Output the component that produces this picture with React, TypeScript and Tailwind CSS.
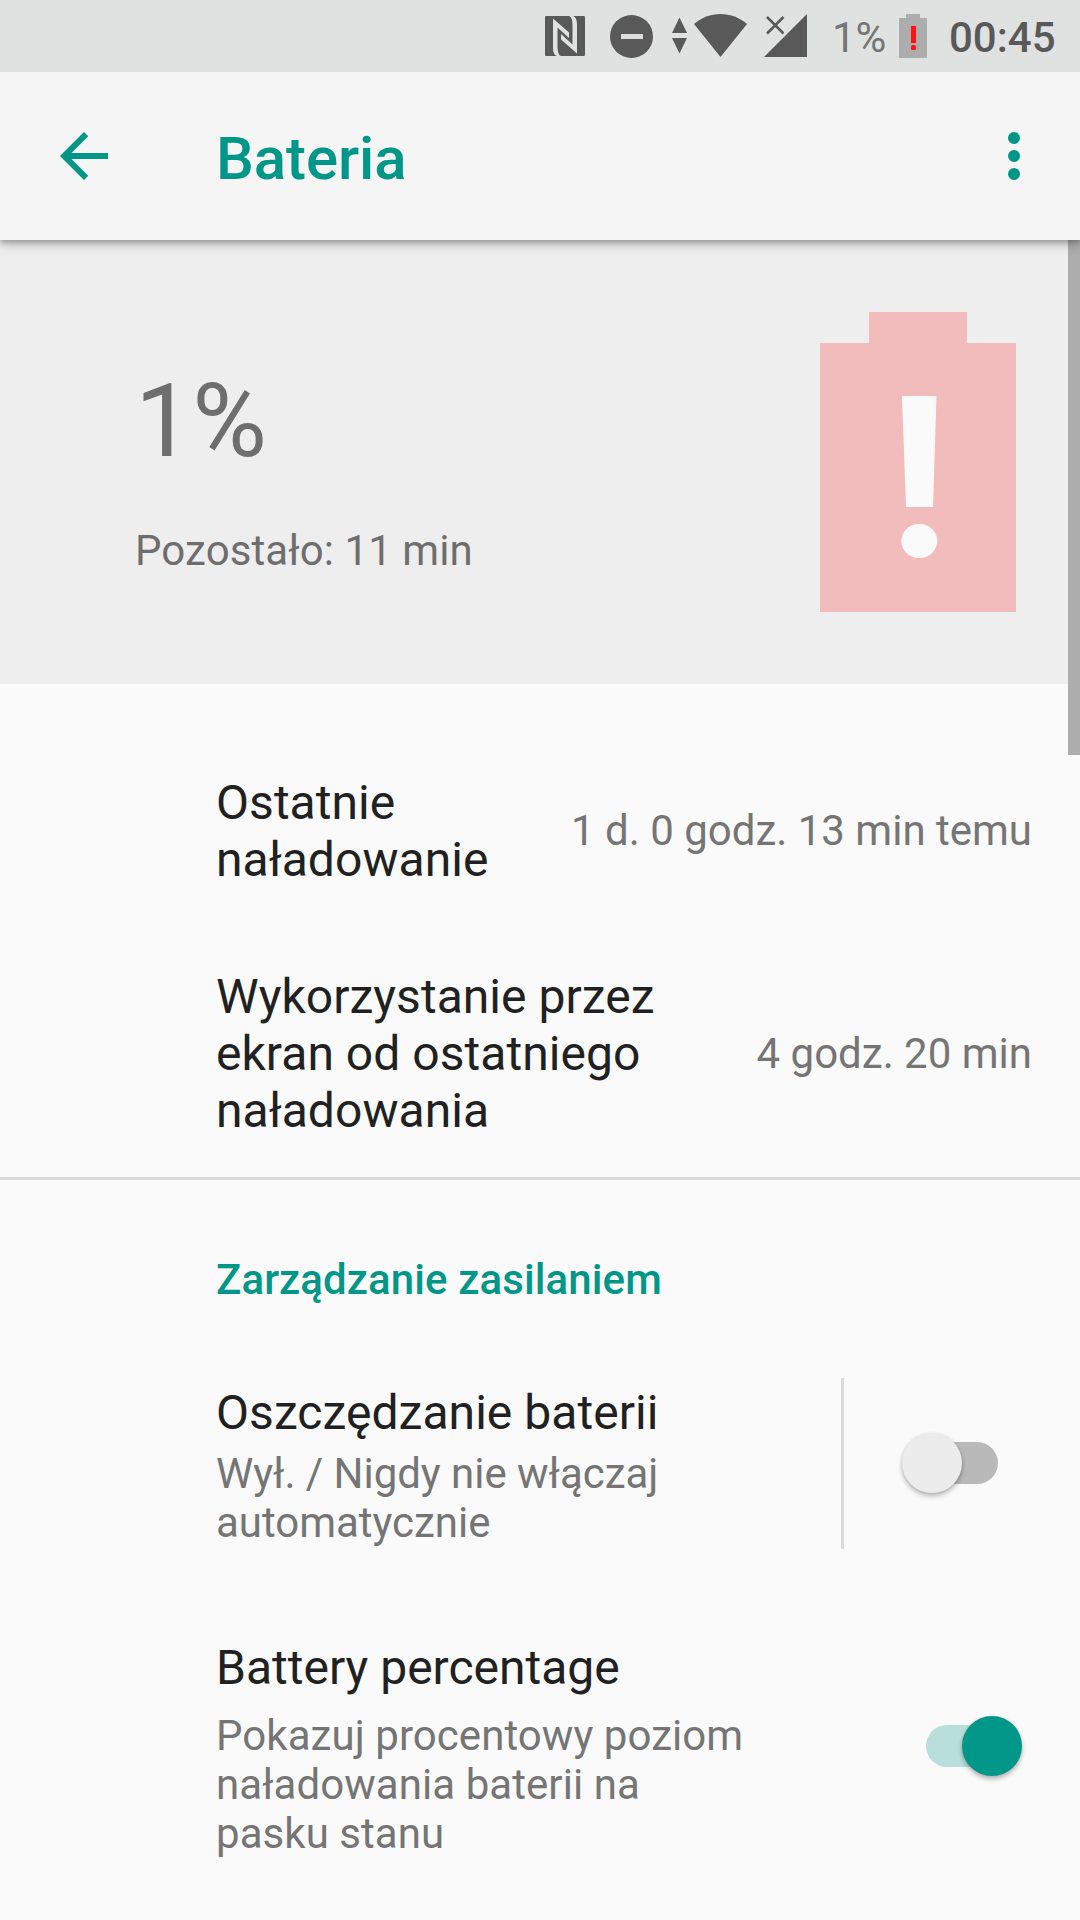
import { useState } from 'react';

const StatusIcons = () => (
  <svg width="262" height="72" viewBox="545 0 262 72" fill="#595959" aria-hidden="true">
    {/* NFC */}
    <path d="M546 16h38a1 1 0 0 1 1 1v38a1 1 0 0 1-1 1h-38a1 1 0 0 1-1-1V17a1 1 0 0 1 1-1z" />
    <path
      d="M553 18.500l16 14v5.500L557.500 27.500v18.500c0 5 .8 9 3.500 10h-4c-3-1-4-4-4-9zM577 53.500L561 39.500v-5.500L572.500 44.500V25c0-5-.8-8-3.500-9h4c3 1 4 4 4 9z"
      fill="#e0e2e1"
    />
    {/* Do not disturb */}
    <circle cx="631.5" cy="36.5" r="21.5" />
    <rect x="621" y="34" width="22" height="5" fill="#dcdedd" />
    {/* Data activity */}
    <path d="M679.500 17.500l7.500 15.500h-15zM679.500 53.500l7.500-15.500h-15z" />
    {/* Wi-Fi */}
    <path d="M720.500 57L694 24c7.500-6.500 16.500-10 26.500-10s19 3.500 26.500 10z" />
    {/* Mobile signal, no connection */}
    <path d="M807 14v43h-43z" />
    <path d="M767 17l16.500 16.500M783.500 17L767 33.500" stroke="#595959" strokeWidth="2.5" />
  </svg>
);

const StatusBattery = () => (
  <svg width="28" height="44" viewBox="0 0 28 44" aria-hidden="true">
    <path d="M7 0h14v4h7v40H0V4h7z" fill="#adadad" />
    <path d="M12 12h5v17h-5z" fill="#fc1414" />
    <rect x="12" y="31" width="5" height="5" rx="1.5" fill="#fc1414" />
  </svg>
);

const LargeBattery = () => (
  <svg width="196" height="300" viewBox="0 0 196 300" aria-hidden="true">
    <path d="M49 0h98v31h49v269H0V31h49z" fill="#f2bcbc" />
    <path d="M82 84h34.500L113 195H86z" fill="#fafafa" />
    <rect x="81.300" y="212" width="36" height="34" rx="17.500" ry="17" fill="#fafafa" />
  </svg>
);

type ToggleProps = {
  label: string;
  checked: boolean;
  onChange: (value: boolean) => void;
};

const Toggle = ({ label, checked, onChange }: ToggleProps) => (
  <button
    type="button"
    role="switch"
    aria-checked={checked}
    aria-label={label}
    onClick={() => onChange(!checked)}
    className={`flex h-[42px] w-[84px] shrink-0 items-center rounded-full ${
      checked ? 'bg-[#b8dfdb]' : 'bg-[#b9b9b9]'
    }`}
  >
    <span
      className={`size-[60px] shrink-0 rounded-full shadow-[0_3px_5px_rgba(0,0,0,0.28),0_0_3px_rgba(0,0,0,0.08)] ${
        checked ? 'translate-x-[36px] bg-[#009688]' : '-translate-x-[12px] bg-[#ececec]'
      }`}
    />
  </button>
);

const stats = [
  { label: 'Ostatnie naładowanie', value: '1 d. 0 godz. 13 min temu', width: 'w-[300px]' },
  { label: 'Wykorzystanie przez ekran od ostatniego naładowania', value: '4 godz. 20 min', width: 'w-[460px]' },
];

export default function App() {
  const [saver, setSaver] = useState(false);
  const [percentage, setPercentage] = useState(true);

  return (
    <div className="flex h-[1920px] w-[1080px] flex-col overflow-hidden bg-[#fafafa] font-['Roboto',sans-serif] text-[42px] leading-[49px] text-[#757575]">
      {/* Status bar */}
      <div className="relative z-20 flex h-[72px] shrink-0 items-center bg-[#e0e2e1] pl-[545px]">
        <StatusIcons />
        <span className="ml-[25px] w-[67px] pt-[3px] whitespace-nowrap">1%</span>
        <StatusBattery />
        <span className="ml-[22px] pt-[3px] font-medium text-[#595959]">00:45</span>
      </div>

      {/* App bar */}
      <header className="relative z-10 flex h-[168px] shrink-0 items-center bg-[#f5f5f5] pr-[60px] pl-[60px] text-[#009688] shadow-[0_4px_12px_rgba(0,0,0,0.22),0_3px_5px_rgba(0,0,0,0.2)]">
        <button type="button" aria-label="Wstecz">
          <svg width="48" height="48" viewBox="4 4 16 16" fill="currentColor">
            <path d="M20 11H7.830l5.590-5.590L12 4l-8 8 8 8 1.410-1.410L7.830 13H20v-2z" />
          </svg>
        </button>
        <h1 className="ml-[108px] flex-1 pt-[5px] text-[60px] leading-[71px] font-medium tracking-[-0.1px]">Bateria</h1>
        <button type="button" aria-label="Więcej opcji" className="flex flex-col gap-[6px]">
          <span className="size-3 rounded-full bg-[#009688]" />
          <span className="size-3 rounded-full bg-[#009688]" />
          <span className="size-3 rounded-full bg-[#009688]" />
        </button>
      </header>

      <main className="relative flex flex-1 flex-col">
        {/* Scrollbar */}
        <div className="absolute top-0 right-0 h-[515px] w-3 bg-[#adadad]" />

        {/* Summary */}
        <section className="flex h-[444px] shrink-0 items-start justify-between bg-[#eeeeee] pr-16 pl-[135px] text-[#6e6e6e]">
          <div className="pt-[121px]">
            <p className="text-[102px] leading-[120px]">1%</p>
            <p className="mt-[45px] tracking-[0.09px]">Pozostało: 11 min</p>
          </div>
          <div className="pt-[72px]">
            <LargeBattery />
          </div>
        </section>

        {/* Usage since last charge */}
        <section className="flex flex-col gap-20 border-b-[3px] border-[#dadada] pt-[90px] pr-12 pb-[38px] pl-[216px]">
          {stats.map((stat) => (
            <div key={stat.label} className="flex items-center justify-between">
              <span className={`${stat.width} text-[48px] leading-[57px] tracking-[0.04px] text-[#212121]`}>
                {stat.label}
              </span>
              <span className="pb-px whitespace-nowrap">{stat.value}</span>
            </div>
          ))}
        </section>

        {/* Power management */}
        <section className="flex flex-col pl-[216px]">
          <h2 className="pt-[75px] font-medium tracking-[0.1px] text-[#009688]">Zarządzanie zasilaniem</h2>

          <div className="mt-[74px] flex h-[171px] pr-[82px]">
            <div className="w-[625px] pt-[6px]">
              <p className="text-[48px] leading-[57px] tracking-[0.04px] text-[#212121]">Oszczędzanie baterii</p>
              <p className="mt-2 w-[480px] tracking-[-0.03px]">Wył. / Nigdy nie włączaj automatycznie</p>
            </div>
            <div className="flex flex-1 items-center justify-end border-l-[3px] border-[#dadada] pb-px">
              <Toggle label="Oszczędzanie baterii" checked={saver} onChange={setSaver} />
            </div>
          </div>

          <div className="mt-[90px] flex items-start justify-between pr-[70px]">
            <div className="w-[540px]">
              <p className="text-[48px] leading-[57px] text-[#212121]">Battery percentage</p>
              <p className="mt-[15px] tracking-[0.06px]">Pokazuj procentowy poziom naładowania baterii na pasku stanu</p>
            </div>
            <div className="pt-[86px]">
              <Toggle label="Battery percentage" checked={percentage} onChange={setPercentage} />
            </div>
          </div>
        </section>
      </main>
    </div>
  );
}
